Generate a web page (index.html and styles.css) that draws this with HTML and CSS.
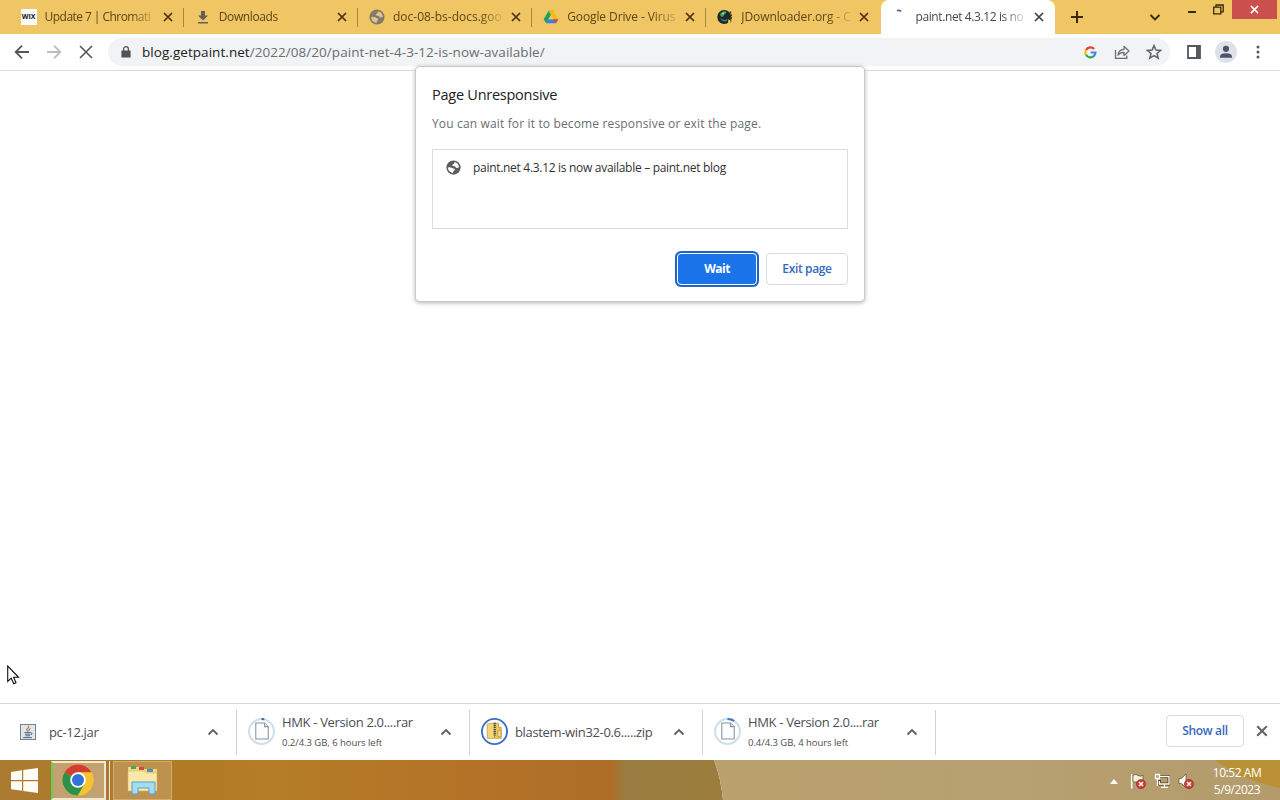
FILE: index.html
```html
<!DOCTYPE html>
<html lang="en">
<head>
    <meta charset="UTF-8">
    <meta name="viewport" content="width=device-width, initial-scale=1.0">
    <title>paint.net 4.3.12 is now available</title>
    <link rel="stylesheet" href="styles.css">
</head>
<body>
    <!-- shared icons -->
    <svg class="defs" width="0" height="0">
        <symbol id="close" viewBox="0 0 10 10"><path d="M1 1L9 9M9 1L1 9" fill="none" stroke="currentColor" stroke-width="1.7"/></symbol>
        <symbol id="up" viewBox="0 0 12 12"><path d="M1.5 8.5L6 4L10.5 8.5" fill="none" stroke="#5f6368" stroke-width="1.9"/></symbol>
        <symbol id="globe" viewBox="0 0 16 16">
            <circle cx="8" cy="8" r="7.6" fill="currentColor"/>
            <path d="M9.4 2.2Q13.2 3.2 13.8 7.4Q12.6 9.2 10.6 8.2Q10.4 6.6 8.4 6.7Q6.2 6.6 6.8 4.9Q8.6 4.8 9.4 2.2Z" fill="var(--land)"/>
            <path d="M2 8Q4.6 7.6 6.2 8.2Q7.4 9.2 9 9.4Q10.2 10.4 8.6 11.4Q7.6 12 7.4 13.9Q2.6 13 2 8Z" fill="var(--land)"/>
        </symbol>
        <symbol id="file" viewBox="0 0 26 26">
            <path d="M7.5 4.8H16L19.5 8.3V20.2H7.5Z" fill="#fbfcfd" stroke="#8a929b" stroke-width="1"/>
            <path d="M16 4.8V8.3H19.5" fill="#e2e6ea" stroke="#8a929b" stroke-width="1"/>
        </symbol>
        <symbol id="badge" viewBox="0 0 10 10">
            <circle cx="5" cy="5" r="4.6" fill="#cf3a32" stroke="#8d2b24" stroke-width=".6"/>
            <path d="M3 3L7 7M7 3L3 7" stroke="#fff" stroke-width="1.5"/>
        </symbol>
    </svg>

    <div class="window">
        <!-- tab strip -->
        <div class="tabs">
            <div class="tab">
                <span class="favicon wix">WIX</span>
                <span class="title t1">Update 7 | Chromati</span>
                <svg class="close"><use href="#close"/></svg>
            </div>
            <div class="tab">
                <svg class="favicon" viewBox="0 0 16 16"><path d="M6 2H10V6.5H13L8 11.5L3 6.5H6ZM3 13H13V14.6H3Z" fill="#655f59"/></svg>
                <span class="title t2">Downloads</span>
                <svg class="close"><use href="#close"/></svg>
            </div>
            <div class="tab">
                <svg class="favicon globe"><use href="#globe"/></svg>
                <span class="title t3">doc-08-bs-docs.goo</span>
                <svg class="close"><use href="#close"/></svg>
            </div>
            <div class="tab">
                <svg class="favicon" viewBox="0 0 16 16">
                    <path d="M5.6 1.7H10.4L5.5 10.2L3.1 14.3L.7 10.2Z" fill="#18a25b"/>
                    <path d="M5.6 1.7H10.4L15.3 10.2H10.5Z" fill="#fbbc05"/>
                    <path d="M5.5 10.2H15.3L12.9 14.3H3.1Z" fill="#3c7ce8"/>
                    <path d="M10.5 10.2H15.3L12.9 14.3Z" fill="#e2493a"/>
                    <path d="M8 6L10.4 10.2H5.6Z" fill="#efc663"/>
                </svg>
                <span class="title t4">Google Drive - Virus</span>
                <svg class="close"><use href="#close"/></svg>
            </div>
            <div class="tab">
                <svg class="favicon" viewBox="0 0 16 16">
                    <circle cx="7.2" cy="8" r="6.9" fill="#1c2b28"/>
                    <path d="M3 6C4 2.5 8 1.5 9.5 3C9 5 7 5 6.5 7C5.5 8.5 4 8 3 6Z" fill="#4f9c6b"/>
                    <path d="M3 8.5C5 11 9 12 11 9.5C10.5 13 5.5 14.5 3 8.5Z" fill="#3f7f8d"/>
                    <path d="M5 4.2L7.4 3.4L6 5.6Z" fill="#e9f3c8"/>
                    <path d="M13 2.5Q15.6 8 13 13.5" fill="none" stroke="#3c3a20" stroke-width="1.5" stroke-dasharray="2 1"/>
                    <path d="M11.5 10L14 12.5L11 14Z" fill="#f3d936"/>
                </svg>
                <span class="title t5">JDownloader.org - C</span>
                <svg class="close"><use href="#close"/></svg>
            </div>
            <div class="tab active">
                <svg class="favicon" viewBox="0 0 16 16"><path d="M5 1.7Q7.3 1 9.2 2.4" fill="none" stroke="#3f6b95" stroke-width="1.7"/></svg>
                <span class="title t6">paint.net 4.3.12 is no</span>
                <svg class="close"><use href="#close"/></svg>
            </div>
            <svg class="new-tab" viewBox="0 0 12 12"><path d="M6 0V12M0 6H12" stroke="#37290f" stroke-width="2"/></svg>
            <div class="controls">
                <svg class="search-tabs" viewBox="0 0 12 12"><path d="M1.5 4L6 8.5L10.5 4" fill="none" stroke="#37290f" stroke-width="1.9"/></svg>
                <svg class="minimize" viewBox="0 0 10 4"><path d="M1 2H9" stroke="#37290f" stroke-width="2"/></svg>
                <svg class="restore" viewBox="0 0 11 11"><path d="M.7 3.2H7.8V9.8H.7ZM3 3V1H10.2V7.8H8" fill="none" stroke="#37290f" stroke-width="1.3"/></svg>
                <div class="close-window"><svg><use href="#close"/></svg></div>
            </div>
        </div>

        <!-- toolbar -->
        <div class="toolbar">
            <svg class="nav" viewBox="0 0 16 16"><path d="M15 8H2M8 1.7L1.7 8L8 14.3" fill="none" stroke="#53575b" stroke-width="1.8"/></svg>
            <svg class="nav" viewBox="0 0 16 16"><path d="M1 8H14M8 1.7L14.3 8L8 14.3" fill="none" stroke="#bbbdbf" stroke-width="1.8"/></svg>
            <svg class="nav" viewBox="0 0 16 16"><path d="M2 2L14 14M14 2L2 14" fill="none" stroke="#53575b" stroke-width="1.6"/></svg>
            <div class="omnibox">
                <svg class="lock" viewBox="0 0 10 12"><path d="M1 4.5H9Q9.6 4.5 9.6 5.2V11Q9.6 11.6 9 11.6H1Q.4 11.6 .4 11V5.2Q.4 4.5 1 4.5Z" fill="#505458"/><path d="M2.6 5V3.1A2.4 2.4 0 0 1 7.4 3.1V5" fill="none" stroke="#505458" stroke-width="1.3"/></svg>
                <div class="url"><span>blog.getpaint.net</span>/2022/08/20/paint-net-4-3-12-is-now-available/</div>
                <svg class="google" viewBox="0 0 14 14" fill="none" stroke-width="2.4">
                    <path d="M2.2 4.4A5.2 5.2 0 0 1 10.9 3.3" stroke="#ea4335"/>
                    <path d="M2.2 9.4A5.2 5.2 0 0 1 2.2 4.4" stroke="#fbbc05"/>
                    <path d="M10.6 10.8A5.2 5.2 0 0 1 2.2 9.4" stroke="#34a853"/>
                    <path d="M7.2 7H12.3A5.2 5.2 0 0 1 10.4 10.9" stroke="#4285f4"/>
                </svg>
                <svg class="share" viewBox="0 0 16 16" fill="none" stroke="#6a6e72" stroke-width="1.3"><path d="M1.5 6V14.3H12.8V11.5"/><path d="M4 11.2Q4.4 5.6 10 5.4V2.4L15 7L10 11.4V8.4Q6.2 8.2 4 11.2Z" stroke-linejoin="round"/></svg>
                <svg class="star" viewBox="0 0 16 16"><path d="M8 1.6L9.9 6L14.7 6.4L11 9.5L12.2 14.2L8 11.7L3.8 14.2L5 9.5L1.3 6.4L6.1 6Z" fill="none" stroke="#5f6368" stroke-width="1.5"/></svg>
            </div>
            <svg class="panel" viewBox="0 0 14 14"><path d="M1 1H13V13H1Z" fill="#fff" stroke="#55595e" stroke-width="1.8"/><path d="M9 1H13V13H9Z" fill="#55595e"/></svg>
            <svg class="profile" viewBox="0 0 22 22"><circle cx="11" cy="11" r="11" fill="#dee1e9"/><circle cx="11" cy="7.8" r="3.1" fill="#4c5466"/><path d="M5 16.8V15.5Q5.4 12.4 11 12.3Q16.6 12.4 17 15.5V16.8Z" fill="#4c5466"/></svg>
            <svg class="more" viewBox="0 0 4 14" fill="#55595e"><circle cx="2" cy="2" r="1.5"/><circle cx="2" cy="7" r="1.5"/><circle cx="2" cy="12" r="1.5"/></svg>
        </div>

        <!-- page -->
        <div class="page">
            <div class="dialog">
                <h1>Page Unresponsive</h1>
                <p>You can wait for it to become responsive or exit the page.</p>
                <div class="pages">
                    <svg><use href="#globe"/></svg>
                    <span>paint.net 4.3.12 is now available – paint.net blog</span>
                </div>
                <div class="buttons">
                    <button class="wait">Wait</button>
                    <button class="exit">Exit page</button>
                </div>
            </div>
            <svg class="cursor" viewBox="0 0 13 20"><path d="M.7 1V16.4L4.2 13.2L6.8 18.8L9 17.8L6.6 12.3H11.6Z" fill="#fff" stroke="#111" stroke-width="1.1"/></svg>
        </div>

        <!-- downloads -->
        <div class="shelf">
            <div class="download first">
                <svg class="jar" viewBox="0 0 16 16">
                    <rect x=".5" y=".5" width="15" height="15" fill="#dfe6ec" stroke="#77818a"/>
                    <path d="M8 7.5Q5.5 5.5 8 4Q9 3 8.3 1.8M9 7.4Q8.4 5.8 10.4 4.4" fill="none" stroke="#c56a35" stroke-width="1.1"/>
                    <path d="M4.4 8.6H10.8M5 10.2H10.4M5.4 11.8H10M3 13.6H12M11 8.6Q13.4 8.8 11 11" fill="none" stroke="#4a6a86" stroke-width="1"/>
                </svg>
                <div class="name">pc-12.jar</div>
                <svg class="up"><use href="#up"/></svg>
            </div>
            <div class="download">
                <svg class="ring" viewBox="0 0 26 26"><circle cx="13" cy="13" r="12" fill="none" stroke="#cfdfe9" stroke-width="2"/><path d="M13 1Q14.5 1 15.7 1.3" fill="none" stroke="#3a6d9d" stroke-width="2"/><use href="#file"/></svg>
                <div class="name rar">HMK - Version 2.0....rar<small>0.2/4.3 GB, 6 hours left</small></div>
                <svg class="up"><use href="#up"/></svg>
            </div>
            <div class="download">
                <svg class="ring" viewBox="0 0 26 26">
                    <circle cx="13" cy="13" r="12.1" fill="none" stroke="#3b6fc4" stroke-width="1.8"/>
                    <path d="M6 6L10.5 5H13V19.5H6Z" fill="#f3d878" stroke="#b99434" stroke-width=".7"/>
                    <path d="M13 5H17V9H19.5V19.5H13Z" fill="#e9c65c" stroke="#b99434" stroke-width=".7"/>
                    <path d="M13.2 4.5V17" stroke="#5a5648" stroke-width="2.4" stroke-dasharray="1.2 .8"/>
                    <rect x="16.2" y="12" width="3" height="6" rx="1.4" fill="#f6e6a4" stroke="#a98630" stroke-width=".7"/>
                </svg>
                <div class="name">blastem-win32-0.6.....zip</div>
                <svg class="up"><use href="#up"/></svg>
            </div>
            <div class="download">
                <svg class="ring" viewBox="0 0 26 26"><circle cx="13" cy="13" r="12" fill="none" stroke="#cfdfe9" stroke-width="2"/><path d="M13 1Q17 1 19.4 2.9" fill="none" stroke="#3a78c0" stroke-width="2"/><use href="#file"/></svg>
                <div class="name rar">HMK - Version 2.0....rar<small>0.4/4.3 GB, 4 hours left</small></div>
                <svg class="up"><use href="#up"/></svg>
            </div>
            <button class="show-all">Show all</button>
            <svg class="close-shelf"><use href="#close"/></svg>
        </div>
    </div>

    <!-- taskbar -->
    <div class="taskbar">
        <svg class="wallpaper" viewBox="0 0 1280 40" preserveAspectRatio="none">
            <defs>
                <linearGradient id="wood" x1="0" x2="1">
                    <stop offset="0" stop-color="#ab7b31"/><stop offset=".25" stop-color="#b17a26"/>
                    <stop offset=".45" stop-color="#b57d27"/><stop offset=".7" stop-color="#b47427"/><stop offset="1" stop-color="#ae6d27"/>
                </linearGradient>
                <linearGradient id="sand" x1="0" x2="1">
                    <stop offset="0" stop-color="#b9a26d"/><stop offset=".5" stop-color="#b7a071"/><stop offset="1" stop-color="#b39b6b"/>
                </linearGradient>
                <linearGradient id="edge" x1="0" x2="1">
                    <stop offset="0" stop-color="#ae6d27"/><stop offset=".12" stop-color="#997d40"/><stop offset="1" stop-color="#9c7d3d"/>
                </linearGradient>
            </defs>
            <rect width="620" height="40" fill="url(#wood)"/>
            <path d="M612 0H714Q721 18 723 40H612Z" fill="url(#edge)"/>
            <path d="M714 0H1280V40H723Q721 18 714 0Z" fill="url(#sand)"/>
            <path d="M1215 0H1280V28Q1240 20 1215 0Z" fill="#ba9137"/>
        </svg>
        <svg class="start" viewBox="0 0 27 25"><path d="M0 4L11 2.2V12H0ZM12.2 2L27 0V12H12.2ZM0 13.2H11V22.8L0 21.2ZM12.2 13.2H27V25L12.2 23Z" fill="#fffdf5"/></svg>
        <div class="task chrome">
            <svg viewBox="0 0 32 32">
                <circle cx="16" cy="16" r="15.5" fill="#f5c431"/>
                <path d="M16 16L2.6 8.2A15.5 15.5 0 0 1 29.4 8.2Z" fill="#d43e2f"/>
                <path d="M16 16L2.6 8.2A15.5 15.5 0 0 0 16 31.5L22.7 19.9Z" fill="#2c9149"/>
                <path d="M16 8.2H29.4A15.5 15.5 0 0 1 16 31.5L22.7 19.9Z" fill="#f5c431"/>
                <circle cx="16" cy="16" r="7.8" fill="#fff"/><circle cx="16" cy="16" r="6" fill="#2f72d9"/>
            </svg>
        </div>
        <div class="task explorer">
            <svg viewBox="0 0 32 30">
                <path d="M1 2H12L14 4H30V25H1Z" fill="#f0d787"/>
                <path d="M4 1H9V4H4Z" fill="#4ba758"/><path d="M12 2H17V5H12Z" fill="#cf4b3e"/><path d="M20 4H26V7H20Z" fill="#4c93bd"/>
                <path d="M1 6H17L20 8H30V26H1Z" fill="#fae9aa" stroke="#d8b65b" stroke-width=".6"/>
                <path d="M5 17H28V29H22V23H11V29H5Z" fill="#a6dcf2" stroke="#4aa2ce" stroke-width="1"/>
            </svg>
        </div>
        <div class="tray">
            <svg class="tray-up" viewBox="0 0 8 5"><path d="M4 0L8 5H0Z" fill="#fff"/></svg>
            <svg class="tray-icon" viewBox="0 0 16 16"><path d="M1.7 1V15.5" stroke="#fff" stroke-width="1.6"/><path d="M3 2Q6 .8 8 2.4T13 2.4V9H3Z" fill="#f5efdf" stroke="#5d4a24" stroke-width=".7"/><use href="#badge" x="6" y="6" width="10" height="10"/></svg>
            <svg class="tray-icon" viewBox="0 0 16 16"><path d="M6 3.5H15V11H5.5V7" fill="none" stroke="#4c3b1c" stroke-width="3"/><path d="M6 3.5H15V11H5.5V8M10.5 11V14M7 14.3H14M1.5 1.5H5.5V5.5H1.5ZM3.5 5.5V13" fill="none" stroke="#fff" stroke-width="1.3"/></svg>
            <svg class="tray-icon" viewBox="0 0 16 16"><path d="M1 5.5H3.5L8 1V15L3.5 10.5H1Z" fill="#fff" stroke="#5d4a24" stroke-width=".7"/><use href="#badge" x="6" y="6" width="10" height="10"/></svg>
            <div class="clock"><span>10:52 AM</span><span>5/9/2023</span></div>
        </div>
    </div>
</body>
</html>
```

FILE: styles.css
```css
* {
    box-sizing: border-box;
}

body {
    margin: 0;
    width: 1280px;
    height: 800px;
    overflow: hidden;
    display: flex;
    flex-direction: column;
    font-family: "Open Sans", "Noto Sans", sans-serif;
    font-size: 12px;
    color: #3c4043;
}

svg {
    flex: none;
    display: block;
}

.defs {
    position: absolute;
}

.window {
    height: 760px;
    display: flex;
    flex-direction: column;
    background: #fff;
}

/* tabs */
.tabs {
    height: 34px;
    padding-left: 9.6px;
    display: flex;
    align-items: center;
    background: #efc663;
}

.tab {
    position: relative;
    width: 174.2px;
    height: 34px;
    padding: 0 10px 0 11px;
    display: flex;
    align-items: center;
    flex: none;
    color: #5c4518;
}

.tab::after {
    content: "";
    position: absolute;
    right: 0;
    top: 8px;
    width: 1px;
    height: 19px;
    background: #a8873f;
}

.tab:nth-child(5)::after,
.tab.active::after {
    display: none;
}

.tab.active {
    background: #fff;
    border-radius: 8px 8px 0 0;
    color: #45484b;
}

.favicon {
    width: 16px;
    height: 16px;
    margin-right: 8px;
    flex: none;
}

.favicon.globe {
    color: #85796a;
    --land: #dcc58c;
}

.wix {
    background: #fff;
    color: #111;
    font-size: 7px;
    font-weight: bold;
    line-height: 16px;
    text-align: center;
}

.title {
    width: 110px;
    white-space: nowrap;
    line-height: 18px;
    -webkit-mask-image: linear-gradient(to right, #000 86px, transparent 114px);
    mask-image: linear-gradient(to right, #000 86px, transparent 114px);
}

.t1 {
    letter-spacing: -.55px;
}

.t2 {
    letter-spacing: -.4px;
}

.t4 {
    letter-spacing: -.1px;
}

.t5 {
    letter-spacing: -.1px;
}

.t6 {
    letter-spacing: -.4px;
}

.close {
    width: 10px;
    height: 10px;
    margin-left: 8px;
    color: #4a2e16;
}

.active .close {
    color: #3c4043;
}

.new-tab {
    width: 12px;
    height: 12px;
    margin-left: 16px;
}

.controls {
    margin-left: auto;
    height: 34px;
    display: flex;
    align-items: flex-start;
}

.search-tabs {
    width: 12px;
    height: 12px;
    margin: 11px 26px 0 0;
}

.minimize {
    width: 10px;
    height: 4px;
    margin: 10px 16px 0 0;
}

.restore {
    width: 11px;
    height: 11px;
    margin: 4px 8px 0 0;
}

.close-window {
    width: 45px;
    height: 19px;
    margin-right: 3px;
    display: flex;
    align-items: center;
    justify-content: center;
    background: #c9504c;
    color: #fff;
}

.close-window svg {
    width: 9px;
    height: 9px;
}

/* toolbar */
.toolbar {
    height: 37px;
    padding: 0 20px 0 14px;
    display: flex;
    align-items: center;
    border-bottom: 1px solid #d9dbdd;
}

.nav {
    width: 16px;
    height: 16px;
    margin-right: 16px;
}

.omnibox {
    width: 1062px;
    height: 28px;
    margin-left: -2px;
    padding: 0 8px 0 13px;
    display: flex;
    align-items: center;
    border-radius: 14px;
    background: #f1f3f4;
}

.lock {
    width: 10px;
    height: 12px;
}

.url {
    margin-left: 11px;
    flex: 1;
    font-size: 13.5px;
    line-height: 20px;
    letter-spacing: .05px;
    white-space: nowrap;
    color: #6a6e72;
}

.url span {
    color: #202124;
}

.google {
    width: 13px;
    height: 13px;
    margin-right: 17px;
}

.share {
    width: 16px;
    height: 16px;
    margin-right: 16px;
}

.star {
    width: 16px;
    height: 16px;
}

.panel {
    width: 14px;
    height: 14px;
    margin-left: 17px;
}

.profile {
    width: 22px;
    height: 22px;
    margin-left: 14px;
}

.more {
    width: 4px;
    height: 14px;
    margin-left: auto;
}

/* page */
.page {
    position: relative;
    flex: 1;
}

.dialog {
    position: absolute;
    left: 416px;
    top: -4px;
    width: 448px;
    height: 234px;
    padding: 18px 16px 16px;
    background: #fff;
    border-radius: 4px;
    box-shadow: 0 0 0 1px #c8cacc, 0 1px 4px 1px rgba(0, 0, 0, .3);
}

.dialog h1 {
    margin: 0;
    font-size: 14.5px;
    font-weight: normal;
    line-height: 20px;
    letter-spacing: -.25px;
    color: #202124;
}

.dialog p {
    margin: 10px 0 0;
    font-size: 12px;
    line-height: 18px;
    letter-spacing: .15px;
    color: #6a6e72;
}

.pages {
    height: 80px;
    margin-top: 16px;
    padding: 9px 13px;
    display: flex;
    align-items: flex-start;
    border: 1px solid #dadce0;
    color: #303134;
    line-height: 18px;
    letter-spacing: -.3px;
}

.pages svg {
    width: 15px;
    height: 15px;
    margin: 1px 12px 0 0;
    color: #5a5c5e;
    --land: #fff;
}

.buttons {
    margin-top: 24px;
    display: flex;
    justify-content: flex-end;
    gap: 9px;
}

button {
    height: 32px;
    padding: 0 0 1px;
    border: 1px solid #dadce0;
    border-radius: 4px;
    background: #fff;
    font: 600 12px "Open Sans", "Noto Sans", sans-serif;
    letter-spacing: -.35px;
    color: #3569c0;
}

.wait {
    width: 80px;
    border: 1px solid #fff;
    background: #1a73e8;
    color: #fff;
    font-weight: 700;
    letter-spacing: -.5px;
    box-shadow: 0 0 0 2px #1c66c4;
}

.exit {
    width: 82px;
}

.cursor {
    position: absolute;
    left: 7px;
    top: 594px;
    width: 13px;
    height: 20px;
}

/* downloads */
.shelf {
    height: 57px;
    display: flex;
    align-items: center;
    border-top: 1px solid #d4d6d8;
}

.download {
    width: 233px;
    height: 45px;
    padding: 0 17px 0 11px;
    display: flex;
    align-items: center;
    flex: none;
    border-right: 1px solid #d0d2d4;
}

.download.first {
    width: 237px;
    padding-left: 20px;
}

.jar {
    width: 16px;
    height: 16px;
    margin: 0 13px 1px 0;
}

.ring {
    width: 27px;
    height: 27px;
    margin: 0 7px 2px 0;
}

.name {
    font-size: 13px;
    line-height: 18px;
    letter-spacing: -.34px;
    white-space: nowrap;
    color: #4b4e51;
}

.rar {
    margin-bottom: 1px;
}

.name small {
    display: block;
    margin-top: 4px;
    font-size: 9.5px;
    line-height: 16px;
    letter-spacing: -.04px;
}

.up {
    width: 12px;
    height: 12px;
    margin-left: auto;
}

.show-all {
    width: 78px;
    margin: 0 0 2px auto;
}

.close-shelf {
    width: 12px;
    height: 12px;
    margin: 0 12px 2px;
    color: #5f6368;
}

/* taskbar */
.taskbar {
    position: relative;
    height: 40px;
    padding-left: 11px;
    display: flex;
    align-items: center;
}

.wallpaper {
    position: absolute;
    left: 0;
    top: 0;
    width: 1280px;
    height: 40px;
    z-index: -1;
}

.start {
    width: 27px;
    height: 25px;
}

.task {
    height: 39px;
    display: flex;
    align-items: center;
    border: 1px solid #cdae76;
    background: rgba(210, 180, 135, .4);
}

.chrome {
    width: 55px;
    margin-left: 13px;
    padding-left: 9px;
    border: 2px solid #f3e8cd;
    border-left-color: #63d04f;
    background: #c4a170;
    box-shadow: 3px 0 0 #a77a3a, 4px 0 0 #f3e8cd;
}

.chrome svg {
    width: 32px;
    height: 32px;
}

.explorer {
    width: 59px;
    margin-left: 7px;
    padding-left: 13px;
}

.explorer svg {
    width: 32px;
    height: 30px;
}

.tray {
    margin: 2px 0 0 auto;
    padding-right: 17px;
    display: flex;
    align-items: center;
}

.tray-up {
    width: 8px;
    height: 5px;
    margin-right: 12px;
}

.tray-icon {
    width: 16px;
    height: 16px;
    margin-right: 8px;
}

.clock {
    width: 52px;
    margin-left: 9px;
    display: flex;
    flex-direction: column;
    align-items: center;
    line-height: 17px;
    letter-spacing: -.45px;
    white-space: nowrap;
    color: #fff;
}
```
